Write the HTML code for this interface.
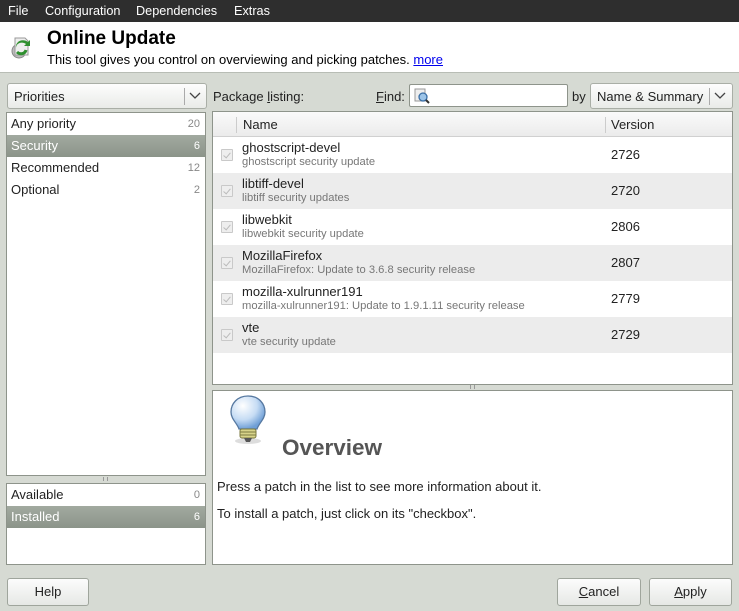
<!DOCTYPE html>
<html><head><meta charset="utf-8"><style>
*{box-sizing:border-box;margin:0;padding:0}
body{width:739px;height:611px;overflow:hidden;background:#d6dad3;font-family:"Liberation Sans","DejaVu Sans",sans-serif;font-size:13px;color:#222;position:relative}
.a{position:absolute}
.menu{left:0;top:0;width:739px;height:22px;background:#2e2e2e;color:#fff;font-size:12.7px}
.menu span{position:absolute;top:4px}
.hdr{left:0;top:22px;width:739px;height:51px;background:#fff;border-bottom:1px solid #b8bdb5}
.combo{background:linear-gradient(#fdfdfd,#e9ebe8);border:1px solid #a9aea6;border-radius:3px}
.list{background:#fff;border:1px solid #8e948b}
.row{position:absolute;left:0;right:0;height:22px;padding:3px 4px 0 4px}
.row .n{position:absolute;right:5px;top:5px;font-size:11px;color:#888}
.sel{background:linear-gradient(#a2aaa0,#8b9489);color:#fff}
.sel .n{color:#fff}
.tr{position:absolute;left:0;right:0;height:36px}
.tr .cb{position:absolute;left:8px;top:12px;width:12px;height:12px;border:1px solid #c9c9c9;background:#eee;border-radius:1px}
.tr .cb:after{content:"";position:absolute;left:3px;top:1px;width:3px;height:6px;border:solid #bbb;border-width:0 1.5px 1.5px 0;transform:rotate(40deg)}
.tr .t1{position:absolute;left:29px;top:3px;font-size:13px;color:#222}
.tr .t2{position:absolute;left:29px;top:19px;font-size:11.2px;color:#777}
.tr .v{position:absolute;left:398px;top:10px;font-size:13px}
.g{background:#ececec}
.btn{background:linear-gradient(#fcfcfc,#e6e8e5);border:1px solid #9fa59c;border-radius:3px;text-align:center;padding-top:5px;height:28px}
</style></head><body>
<div class="a menu"><span style="left:8px">File</span><span style="left:45px">Configuration</span><span style="left:136px">Dependencies</span><span style="left:234px">Extras</span></div>
<div class="a hdr">
<svg class="a" style="left:9px;top:12px" width="24" height="26" viewBox="0 0 24 26"><circle cx="10" cy="17" r="7" fill="#bbb" stroke="#888"/><path d="M6 4h10l3 3v14H6z" fill="#eee" stroke="#999"/><path d="M7 14c0-5 6-7 10-4l-2 2h6v-6l-2 2c-5-4-13-1-12 6z" fill="#2f8f2f"/><path d="M8 18c3 3 8 2 9-2" stroke="#2f8f2f" stroke-width="3" fill="none"/></svg>
<div class="a" style="left:47px;top:6px;font-size:19px;font-weight:bold;color:#000">Online Update</div>
<div class="a" style="left:47px;top:30px;font-size:13px;color:#000">This tool gives you control on overviewing and picking patches. <span style="color:#00e;text-decoration:underline">more</span></div>
</div>
<div class="a combo" style="left:7px;top:83px;width:200px;height:26px"><span class="a" style="left:6px;top:5px">Priorities</span><span class="a" style="left:176px;top:4px;width:1px;height:17px;background:#aaa"></span><svg class="a" style="left:181px;top:8px" width="12" height="8"><path d="M1 1l5 5 5-5" stroke="#444" fill="none" stroke-width="1.3"/></svg></div>
<div class="a list" style="left:6px;top:112px;width:200px;height:364px">
<div class="row" style="top:0">Any priority<span class="n">20</span></div>
<div class="row sel" style="top:22px">Security<span class="n">6</span></div>
<div class="row" style="top:44px">Recommended<span class="n">12</span></div>
<div class="row" style="top:66px">Optional<span class="n">2</span></div>
</div>
<div class="a" style="left:103px;top:477px;width:5px;height:4px;border-left:1px solid #999;border-right:1px solid #999"></div>
<div class="a list" style="left:6px;top:483px;width:200px;height:82px">
<div class="row" style="top:0">Available<span class="n">0</span></div>
<div class="row sel" style="top:22px">Installed<span class="n">6</span></div>
</div>
<div class="a" style="left:213px;top:89px">Package <u>l</u>isting:</div>
<div class="a" style="left:376px;top:89px"><u>F</u>ind:</div>
<div class="a" style="left:409px;top:84px;width:159px;height:23px;background:#fff;border:1px solid #8e948b;border-radius:2px"><svg class="a" style="left:4px;top:3px" width="16" height="16"><rect x="1" y="1" width="10" height="12" fill="#eee" stroke="#999"/><circle cx="9" cy="9" r="4" fill="#9cc4e8" stroke="#3a6ea5" stroke-width="1.3"/><path d="M12 12l3 3" stroke="#333" stroke-width="2"/></svg></div>
<div class="a" style="left:572px;top:89px">by</div>
<div class="a combo" style="left:590px;top:83px;width:143px;height:26px"><span class="a" style="left:6px;top:5px">Name &amp; Summary</span><span class="a" style="left:118px;top:4px;width:1px;height:17px;background:#aaa"></span><svg class="a" style="left:123px;top:8px" width="12" height="8"><path d="M1 1l5 5 5-5" stroke="#444" fill="none" stroke-width="1.3"/></svg></div>
<div class="a list" style="left:212px;top:111px;width:521px;height:274px;overflow:hidden">
<div class="a" style="left:0;top:0;width:521px;height:25px;background:linear-gradient(#fafafa,#ebebeb);border-bottom:1px solid #d0d0d0">
<span class="a" style="left:23px;top:5px;width:1px;height:16px;background:#ccc"></span><span class="a" style="left:30px;top:5px">Name</span>
<span class="a" style="left:392px;top:5px;width:1px;height:16px;background:#ccc"></span><span class="a" style="left:398px;top:5px">Version</span></div>
<div class="tr" style="top:25px"><div class="cb"></div><div class="t1">ghostscript-devel</div><div class="t2">ghostscript security update</div><div class="v">2726</div></div>
<div class="tr g" style="top:61px"><div class="cb"></div><div class="t1">libtiff-devel</div><div class="t2">libtiff security updates</div><div class="v">2720</div></div>
<div class="tr" style="top:97px"><div class="cb"></div><div class="t1">libwebkit</div><div class="t2">libwebkit security update</div><div class="v">2806</div></div>
<div class="tr g" style="top:133px"><div class="cb"></div><div class="t1">MozillaFirefox</div><div class="t2">MozillaFirefox: Update to 3.6.8 security release</div><div class="v">2807</div></div>
<div class="tr" style="top:169px"><div class="cb"></div><div class="t1">mozilla-xulrunner191</div><div class="t2">mozilla-xulrunner191: Update to 1.9.1.11 security release</div><div class="v">2779</div></div>
<div class="tr g" style="top:205px"><div class="cb"></div><div class="t1">vte</div><div class="t2">vte security update</div><div class="v">2729</div></div>
</div>
<div class="a" style="left:470px;top:385px;width:5px;height:4px;border-left:1px solid #999;border-right:1px solid #999"></div>
<div class="a list" style="left:212px;top:390px;width:521px;height:175px">
<svg class="a" style="left:15px;top:3px" width="40" height="54" viewBox="0 0 40 54"><defs><radialGradient id="b" cx="0.35" cy="0.3" r="0.7"><stop offset="0" stop-color="#fff"/><stop offset="0.6" stop-color="#c6dcf4"/><stop offset="1" stop-color="#6f9fd6"/></radialGradient></defs><ellipse cx="20" cy="47" rx="13" ry="3" fill="#ddd"/><path d="M20 2C9 2 3 10 3 18c0 7 6 11 8 17h18c2-6 8-10 8-17C37 10 31 2 20 2z" fill="url(#b)" stroke="#5678a0" stroke-width="1.3"/><rect x="12" y="35" width="16" height="9" rx="2" fill="#d8d48a" stroke="#7b7a40"/><path d="M12 38h16M12 41h16" stroke="#7b7a40"/><path d="M16 44h8l-2 4h-4z" fill="#555"/></svg>
<div class="a" style="left:69px;top:44px;font-size:22.5px;font-weight:bold;color:#555">Overview</div>
<div class="a" style="left:4px;top:88px">Press a patch in the list to see more information about it.</div>
<div class="a" style="left:4px;top:115px">To install a patch, just click on its "checkbox".</div>
</div>
<div class="a btn" style="left:7px;top:578px;width:82px">Help</div>
<div class="a btn" style="left:557px;top:578px;width:84px"><u>C</u>ancel</div>
<div class="a btn" style="left:649px;top:578px;width:83px"><u>A</u>pply</div>
</body></html>
